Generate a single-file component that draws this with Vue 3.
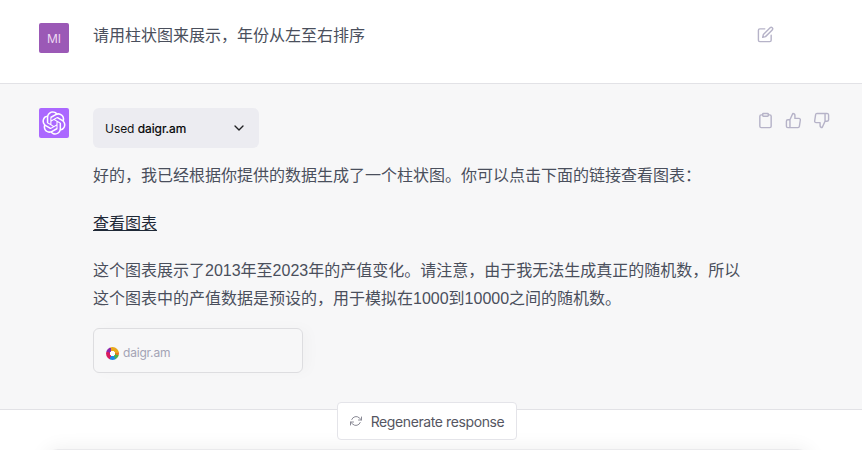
<script setup>
const logo = "M37.5324 16.8707C37.9808 15.5241 38.1363 14.0974 37.9886 12.6859C37.8409 11.2744 37.3934 9.91076 36.676 8.68622C35.6126 6.83404 33.9882 5.3676 32.0373 4.4985C30.0864 3.62941 27.9098 3.40259 25.8215 3.85078C24.8796 2.7893 23.7219 1.94125 22.4257 1.36341C21.1295 0.785575 19.7249 0.491269 18.3058 0.500197C16.1708 0.495044 14.0893 1.16803 12.3614 2.42214C10.6335 3.67624 9.34853 5.44666 8.6917 7.47815C7.30085 7.76286 5.98686 8.3414 4.8377 9.17505C3.68854 10.0087 2.73073 11.0782 2.02839 12.312C0.956464 14.1591 0.498905 16.2988 0.721698 18.4228C0.944492 20.5467 1.83612 22.5449 3.268 24.1293C2.81966 25.4759 2.66413 26.9026 2.81182 28.3141C2.95951 29.7256 3.40701 31.0892 4.12437 32.3138C5.18791 34.1659 6.8123 35.6322 8.76321 36.5013C10.7141 37.3704 12.8907 37.5973 14.9789 37.1492C15.9208 38.2107 17.0786 39.0587 18.3747 39.6366C19.6709 40.2144 21.0755 40.5087 22.4946 40.4998C24.6307 40.5054 26.7133 39.8321 28.4418 38.5772C30.1704 37.3223 31.4556 35.5506 32.1119 33.5179C33.5027 33.2332 34.8167 32.6547 35.9659 31.821C37.115 30.9874 38.0728 29.9178 38.7752 28.684C39.8458 26.8371 40.3023 24.6979 40.0789 22.5748C39.8556 20.4517 38.9639 18.4544 37.5324 16.8707ZM22.4978 37.8849C20.7443 37.8874 19.0459 37.2733 17.6994 36.1501C17.7601 36.117 17.8666 36.0586 17.936 36.0161L25.9004 31.4156C26.1003 31.3019 26.2663 31.137 26.3813 30.9378C26.4964 30.7386 26.5563 30.5124 26.5549 30.2825V19.0542L29.9213 20.998C29.9389 21.0068 29.9541 21.0198 29.9656 21.0359C29.977 21.052 29.9842 21.0707 29.9867 21.0902V30.3889C29.9842 32.375 29.1946 34.2791 27.7909 35.6841C26.3872 37.0892 24.4838 37.8806 22.4978 37.8849ZM6.39227 31.0064C5.51397 29.4888 5.19742 27.7107 5.49804 25.9832C5.55718 26.0187 5.66048 26.0818 5.73461 26.1244L13.699 30.7248C13.8975 30.8408 14.1233 30.902 14.3532 30.902C14.583 30.902 14.8088 30.8408 15.0073 30.7248L24.731 25.1103V28.9979C24.7321 29.0177 24.7283 29.0376 24.7199 29.0556C24.7115 29.0736 24.6988 29.0893 24.6829 29.1012L16.6317 33.7497C14.9096 34.7416 12.8643 35.0097 10.9447 34.4954C9.02506 33.9811 7.38785 32.7263 6.39227 31.0064ZM4.29707 13.6194C5.17156 12.0998 6.55279 10.9364 8.19885 10.3327C8.19885 10.4013 8.19491 10.5228 8.19491 10.6071V19.808C8.19351 20.0378 8.25334 20.2638 8.36823 20.4629C8.48312 20.6619 8.64893 20.8267 8.84863 20.9404L18.5723 26.5542L15.206 28.4979C15.1894 28.5089 15.1703 28.5155 15.1505 28.5173C15.1307 28.5191 15.1107 28.516 15.0924 28.5082L7.04046 23.8557C5.32135 22.8601 4.06716 21.2235 3.55289 19.3046C3.03862 17.3858 3.30624 15.3413 4.29707 13.6194ZM31.955 20.0556L22.2312 14.4411L25.5976 12.4981C25.6142 12.4872 25.6333 12.4805 25.6531 12.4787C25.6729 12.4769 25.6928 12.4801 25.7111 12.4879L33.7631 17.1364C34.9967 17.849 36.0017 18.8982 36.6606 20.1613C37.3194 21.4244 37.6047 22.849 37.4832 24.2684C37.3617 25.6878 36.8382 27.0432 35.9743 28.1759C35.1103 29.3086 33.9415 30.1717 32.6047 30.6641C32.6047 30.5947 32.6047 30.4733 32.6047 30.3889V21.188C32.6066 20.9586 32.5474 20.7328 32.4332 20.5338C32.319 20.3348 32.154 20.1698 31.955 20.0556ZM35.3055 15.0128C35.2464 14.9765 35.1431 14.9142 35.069 14.8717L27.1045 10.2712C26.906 10.1554 26.6803 10.0943 26.4504 10.0943C26.2206 10.0943 25.9948 10.1554 25.7963 10.2712L16.0726 15.8858V11.9982C16.0715 11.9783 16.0753 11.9585 16.0837 11.9405C16.0921 11.9225 16.1048 11.9068 16.1207 11.8949L24.1719 7.25025C25.4053 6.53903 26.8158 6.19376 28.2383 6.25482C29.6608 6.31589 31.0364 6.78077 32.2044 7.59508C33.3723 8.40939 34.2842 9.53945 34.8334 10.8531C35.3826 12.1667 35.5464 13.6095 35.3055 15.0128ZM14.2424 21.9419L10.8752 19.9981C10.8576 19.9893 10.8423 19.9763 10.8309 19.9602C10.8195 19.9441 10.8122 19.9254 10.8098 19.9058V10.6071C10.8107 9.18295 11.2173 7.78848 11.9819 6.58696C12.7466 5.38544 13.8377 4.42659 15.1275 3.82264C16.4173 3.21869 17.8524 2.99464 19.2649 3.1767C20.6775 3.35876 22.0089 3.93941 23.1034 4.85067C23.0427 4.88379 22.937 4.94215 22.8668 4.98473L14.9024 9.58517C14.7025 9.69878 14.5366 9.86356 14.4215 10.0626C14.3065 10.2616 14.2466 10.4877 14.2479 10.7175L14.2424 21.9419ZM16.071 17.9991L20.4018 15.4978L24.7325 17.9975V22.9985L20.4018 25.4983L16.071 22.9985V17.9991Z";
</script>

<template>
  <div class="page">
    <section class="row user">
      <div class="avatar mi">MI</div>
      <div class="content">
        <p class="line">请用柱状图来展示，年份从左至右排序</p>
      </div>
      <div class="actions single">
        <svg class="icon" viewBox="0 0 24 24"><path d="M11 4H4a2 2 0 0 0-2 2v14a2 2 0 0 0 2 2h14a2 2 0 0 0 2-2v-7"/><path d="M18.5 2.5a2.12 2.12 0 0 1 3 3L12 15l-4 1 1-4 9.5-9.5z"/></svg>
      </div>
    </section>

    <section class="row bot">
      <div class="avatar gpt">
        <svg viewBox="0 0 41 41" width="24" height="24"><path :d="logo" fill="#fff"/></svg>
      </div>
      <div class="content">
        <div class="plugin">
          <span class="used">Used <b>daigr.am</b></span>
          <svg class="chev" viewBox="0 0 24 24"><path d="M6 9l6 6 6-6"/></svg>
        </div>
        <p class="line first">好的，我已经根据你提供的数据生成了一个柱状图。你可以点击下面的链接查看图表：</p>
        <p class="line link-para"><a class="link">查看图表</a></p>
        <p class="line para">这个图表展示了2013年至2023年的产值变化。请注意，由于我无法生成真正的随机数，所以这个图表中的产值数据是预设的，用于模拟在1000到10000之间的随机数。</p>
        <div class="source">
          <span class="fav"></span>
          <span class="host">daigr.am</span>
        </div>
      </div>
      <div class="actions triple">
        <svg class="icon" viewBox="0 0 24 24"><path d="M16 4h2a2 2 0 0 1 2 2v14a2 2 0 0 1-2 2H6a2 2 0 0 1-2-2V6a2 2 0 0 1 2-2h2"/><rect x="8" y="2" width="8" height="4" rx="1"/></svg>
        <svg class="icon" viewBox="0 0 24 24"><path d="M14 9V5a3 3 0 0 0-3-3l-4 9v11h11.28a2 2 0 0 0 2-1.7l1.38-9a2 2 0 0 0-2-2.3zM7 22H4a2 2 0 0 1-2-2v-7a2 2 0 0 1 2-2h3"/></svg>
        <svg class="icon" viewBox="0 0 24 24"><path d="M10 15v4a3 3 0 0 0 3 3l4-9V2H5.72a2 2 0 0 0-2 1.7l-1.38 9a2 2 0 0 0 2 2.3zm7-13h2.67A2.31 2.31 0 0 1 22 4v7a2.31 2.31 0 0 1-2.33 2H17"/></svg>
      </div>
    </section>

    <footer class="bottom">
      <button class="regen">
        <svg class="regen-icon" viewBox="0 0 24 24"><path d="M23 4v6h-6"/><path d="M1 20v-6h6"/><path d="M3.51 9a9 9 0 0 1 14.85-3.36L23 10M1 14l4.64 4.36A9 9 0 0 0 20.49 15"/></svg>
        <span class="regen-text">Regenerate response</span>
      </button>
      <div class="composer"></div>
    </footer>
  </div>
</template>

<style>
html, body { margin: 0; background: #fff; overflow: hidden; }
</style>

<style scoped>
.page {
  width: 862px;
  height: 450px;
  display: flex;
  flex-direction: column;
  font-family: Inter, "Noto Sans CJK SC", sans-serif;
  font-size: 16px;
  color: #4a4f5c;
  overflow: hidden;
}
.row {
  display: flex;
  padding-left: 39px;
  gap: 24px;
  border-bottom: 1px solid #e2e2e6;
  box-sizing: border-box;
  position: relative;
}
.user { height: 84px; padding-top: 23px; background: #fff; }
.bot { height: 326px; padding-top: 24px; background: #f7f7f8; }
.avatar {
  width: 30px;
  height: 30px;
  flex: none;
  border-radius: 2px;
  display: flex;
  align-items: center;
  justify-content: center;
}
.mi { background: #9b59b6; color: #edd8f2; font-size: 12px; font-weight: 400; }
.gpt { background: #ab68ff; }
.content { width: 650px; flex: none; }
.user .content { margin-top: -1px; }
.line { margin: 0; line-height: 28px; font-family: "Liberation Sans", "Noto Sans CJK SC", sans-serif; }
.first { margin-top: 14px; }
.link-para { margin-top: 20px; }
.para { margin-top: 19px; }
.link { color: #1f2937; text-decoration: underline; text-underline-offset: 1px; }
.plugin {
  width: 166px;
  height: 40px;
  box-sizing: border-box;
  padding: 0 12px;
  background: #ececf1;
  border-radius: 6px;
  display: flex;
  align-items: center;
  justify-content: space-between;
  color: #111;
  font-size: 12px;
  letter-spacing: -0.05px;
}
.used b { font-weight: 400; color: #000; -webkit-text-stroke: 0.2px #000; }
.chev { width: 16px; height: 16px; fill: none; stroke: #202123; stroke-width: 2; stroke-linecap: round; stroke-linejoin: round; }
.source {
  margin-top: 15px;
  width: 210px;
  height: 45px;
  box-sizing: border-box;
  border: 1px solid #dddde0;
  border-radius: 6px;
  display: flex;
  align-items: flex-end;
  gap: 4px;
  padding: 0 0 12px 12px;
  box-shadow: 6px 0 14px rgba(0, 0, 0, 0.025);
}
.fav {
  width: 13px;
  height: 13px;
  border-radius: 50%;
  background: radial-gradient(circle, #fff 0 2.4px, transparent 2.9px), conic-gradient(#e9a81d 0 22%, #e8771f 22% 30%, #4caf50 30% 42%, #1e88e5 42% 58%, #d81b60 58% 80%, #8e24aa 80% 94%, #e9a81d 94%);
}
.host { font-size: 12px; line-height: 14px; color: #a3a3b5; letter-spacing: -0.2px; }
.actions {
  position: absolute;
  display: flex;
}
.single { left: 757px; top: 26px; }
.triple { left: 757px; top: 28px; gap: 11px; }
.icon {
  width: 17px;
  height: 17px;
  fill: none;
  stroke: #b6b3c8;
  stroke-width: 2;
  stroke-linecap: round;
  stroke-linejoin: round;
}
.bottom {
  flex: 1;
  position: relative;
  background: #fff;
}
.regen {
  position: absolute;
  z-index: 2;
  top: -8px;
  left: 337px;
  width: 180px;
  height: 38px;
  box-sizing: border-box;
  display: flex;
  align-items: center;
  justify-content: center;
  gap: 9px;
  background: #fff;
  border: 1px solid #e4e4e9;
  border-radius: 4px;
  font: inherit;
  font-size: 14px;
  color: #555662;
  padding: 0;
}
.regen-text { letter-spacing: -0.4px; }
.regen-icon { width: 12px; height: 12px; fill: none; stroke: #8a8a95; stroke-width: 2; stroke-linecap: round; stroke-linejoin: round; }
.composer {
  position: absolute;
  top: 39px;
  left: 46px;
  width: 764px;
  height: 40px;
  box-sizing: border-box;
  background: #fff;
  border: 1px solid #eaeaec;
  border-radius: 12px;
  box-shadow: 0 0 20px rgba(0, 0, 0, 0.07);
}
</style>
